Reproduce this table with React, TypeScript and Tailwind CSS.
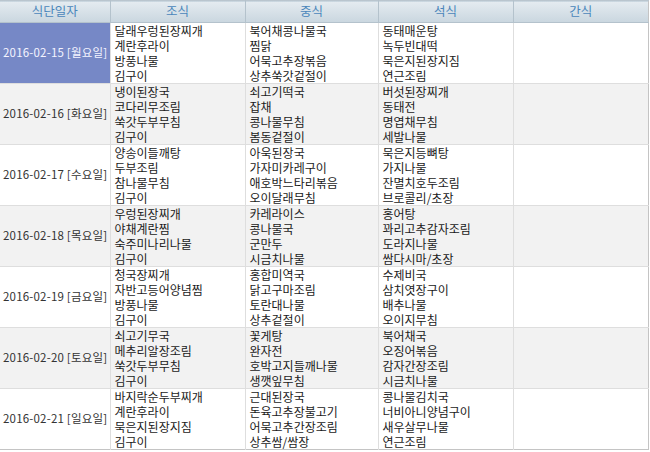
import React from "react";

type Day = {
  date: string;
  breakfast: string[];
  lunch: string[];
  dinner: string[];
  snack: string[];
};

const days: Day[] = [
  {
    date: "2016-02-15 [월요일]",
    breakfast: ["달래우렁된장찌개", "계란후라이", "방풍나물", "김구이"],
    lunch: ["북어채콩나물국", "찜닭", "어묵고추장볶음", "상추쑥갓겉절이"],
    dinner: ["동태매운탕", "녹두빈대떡", "묵은지된장지짐", "연근조림"],
    snack: [],
  },
  {
    date: "2016-02-16 [화요일]",
    breakfast: ["냉이된장국", "코다리무조림", "쑥갓두부무침", "김구이"],
    lunch: ["쇠고기떡국", "잡채", "콩나물무침", "봄동겉절이"],
    dinner: ["버섯된장찌개", "동태전", "명엽채무침", "세발나물"],
    snack: [],
  },
  {
    date: "2016-02-17 [수요일]",
    breakfast: ["양송이들깨탕", "두부조림", "참나물무침", "김구이"],
    lunch: ["아욱된장국", "가자미카레구이", "애호박느타리볶음", "오이달래무침"],
    dinner: ["묵은지등뼈탕", "가지나물", "잔멸치호두조림", "브로콜리/초장"],
    snack: [],
  },
  {
    date: "2016-02-18 [목요일]",
    breakfast: ["우렁된장찌개", "야채계란찜", "숙주미나리나물", "김구이"],
    lunch: ["카레라이스", "콩나물국", "군만두", "시금치나물"],
    dinner: ["홍어탕", "꽈리고추감자조림", "도라지나물", "쌈다시마/초장"],
    snack: [],
  },
  {
    date: "2016-02-19 [금요일]",
    breakfast: ["청국장찌개", "자반고등어양념찜", "방풍나물", "김구이"],
    lunch: ["홍합미역국", "닭고구마조림", "토란대나물", "상추겉절이"],
    dinner: ["수제비국", "삼치엿장구이", "배추나물", "오이지무침"],
    snack: [],
  },
  {
    date: "2016-02-20 [토요일]",
    breakfast: ["쇠고기무국", "메추리알장조림", "쑥갓두부무침", "김구이"],
    lunch: ["꽃게탕", "완자전", "호박고지들깨나물", "생깻잎무침"],
    dinner: ["북어채국", "오징어볶음", "감자간장조림", "시금치나물"],
    snack: [],
  },
  {
    date: "2016-02-21 [일요일]",
    breakfast: ["바지락순두부찌개", "계란후라이", "묵은지된장지짐", "김구이"],
    lunch: ["근대된장국", "돈육고추장불고기", "어묵고추간장조림", "상추쌈/쌈장"],
    dinner: ["콩나물김치국", "너비아니양념구이", "새우살무나물", "연근조림"],
    snack: [],
  },
];

const headers = ["식단일자", "조식", "중식", "석식", "간식"];

function MenuCell({ items }: { items: string[] }) {
  return (
    <td className="border-l border-[#dedede] px-[4px] align-middle">
      {items.map((m, i) => (
        <div key={i} className="leading-[15px] whitespace-nowrap">
          {m}
        </div>
      ))}
    </td>
  );
}

export default function App() {
  return (
    <div
      className="w-[650px] h-[452px] bg-white text-[12px] text-[#1a1a1a]"
      style={{ fontFamily: '"Noto Sans CJK KR", "Noto Sans", sans-serif' }}
    >
      <table className="w-[649px] border-collapse table-fixed border-r border-b border-[#c4c4c4]">
        <colgroup>
          <col className="w-[110px]" />
          <col className="w-[135px]" />
          <col className="w-[133px]" />
          <col className="w-[135px]" />
          <col />
        </colgroup>
        <thead>
          <tr className="h-[22px] bg-gradient-to-b from-[#e4ebf0] to-[#c9d6df] border-t border-[#b9c5ce]">
            {headers.map((h, i) => (
              <th
                key={h}
                className={`font-normal text-[12.5px] text-[#4b86bb] text-center border-b border-[#b4c2cc] ${
                  i > 0 ? "border-l border-[#aebcc6]" : ""
                }`}
              >
                {h}
              </th>
            ))}
          </tr>
        </thead>
        <tbody>
          {days.map((d, idx) => (
            <tr
              key={d.date}
              className={`h-[61px] border-t border-[#dedede] ${
                idx % 2 === 1 ? "bg-[#f2f2f2]" : "bg-white"
              }`}
            >
              <td
                className={`pl-[3px] whitespace-nowrap text-[11.5px] tracking-[0.2px] align-middle ${
                  idx === 0 ? "bg-[#7688c6] text-[#f4f4ff]" : "text-[#333]"
                }`}
              >
                {d.date}
              </td>
              <MenuCell items={d.breakfast} />
              <MenuCell items={d.lunch} />
              <MenuCell items={d.dinner} />
              <MenuCell items={d.snack} />
            </tr>
          ))}
        </tbody>
      </table>
    </div>
  );
}
